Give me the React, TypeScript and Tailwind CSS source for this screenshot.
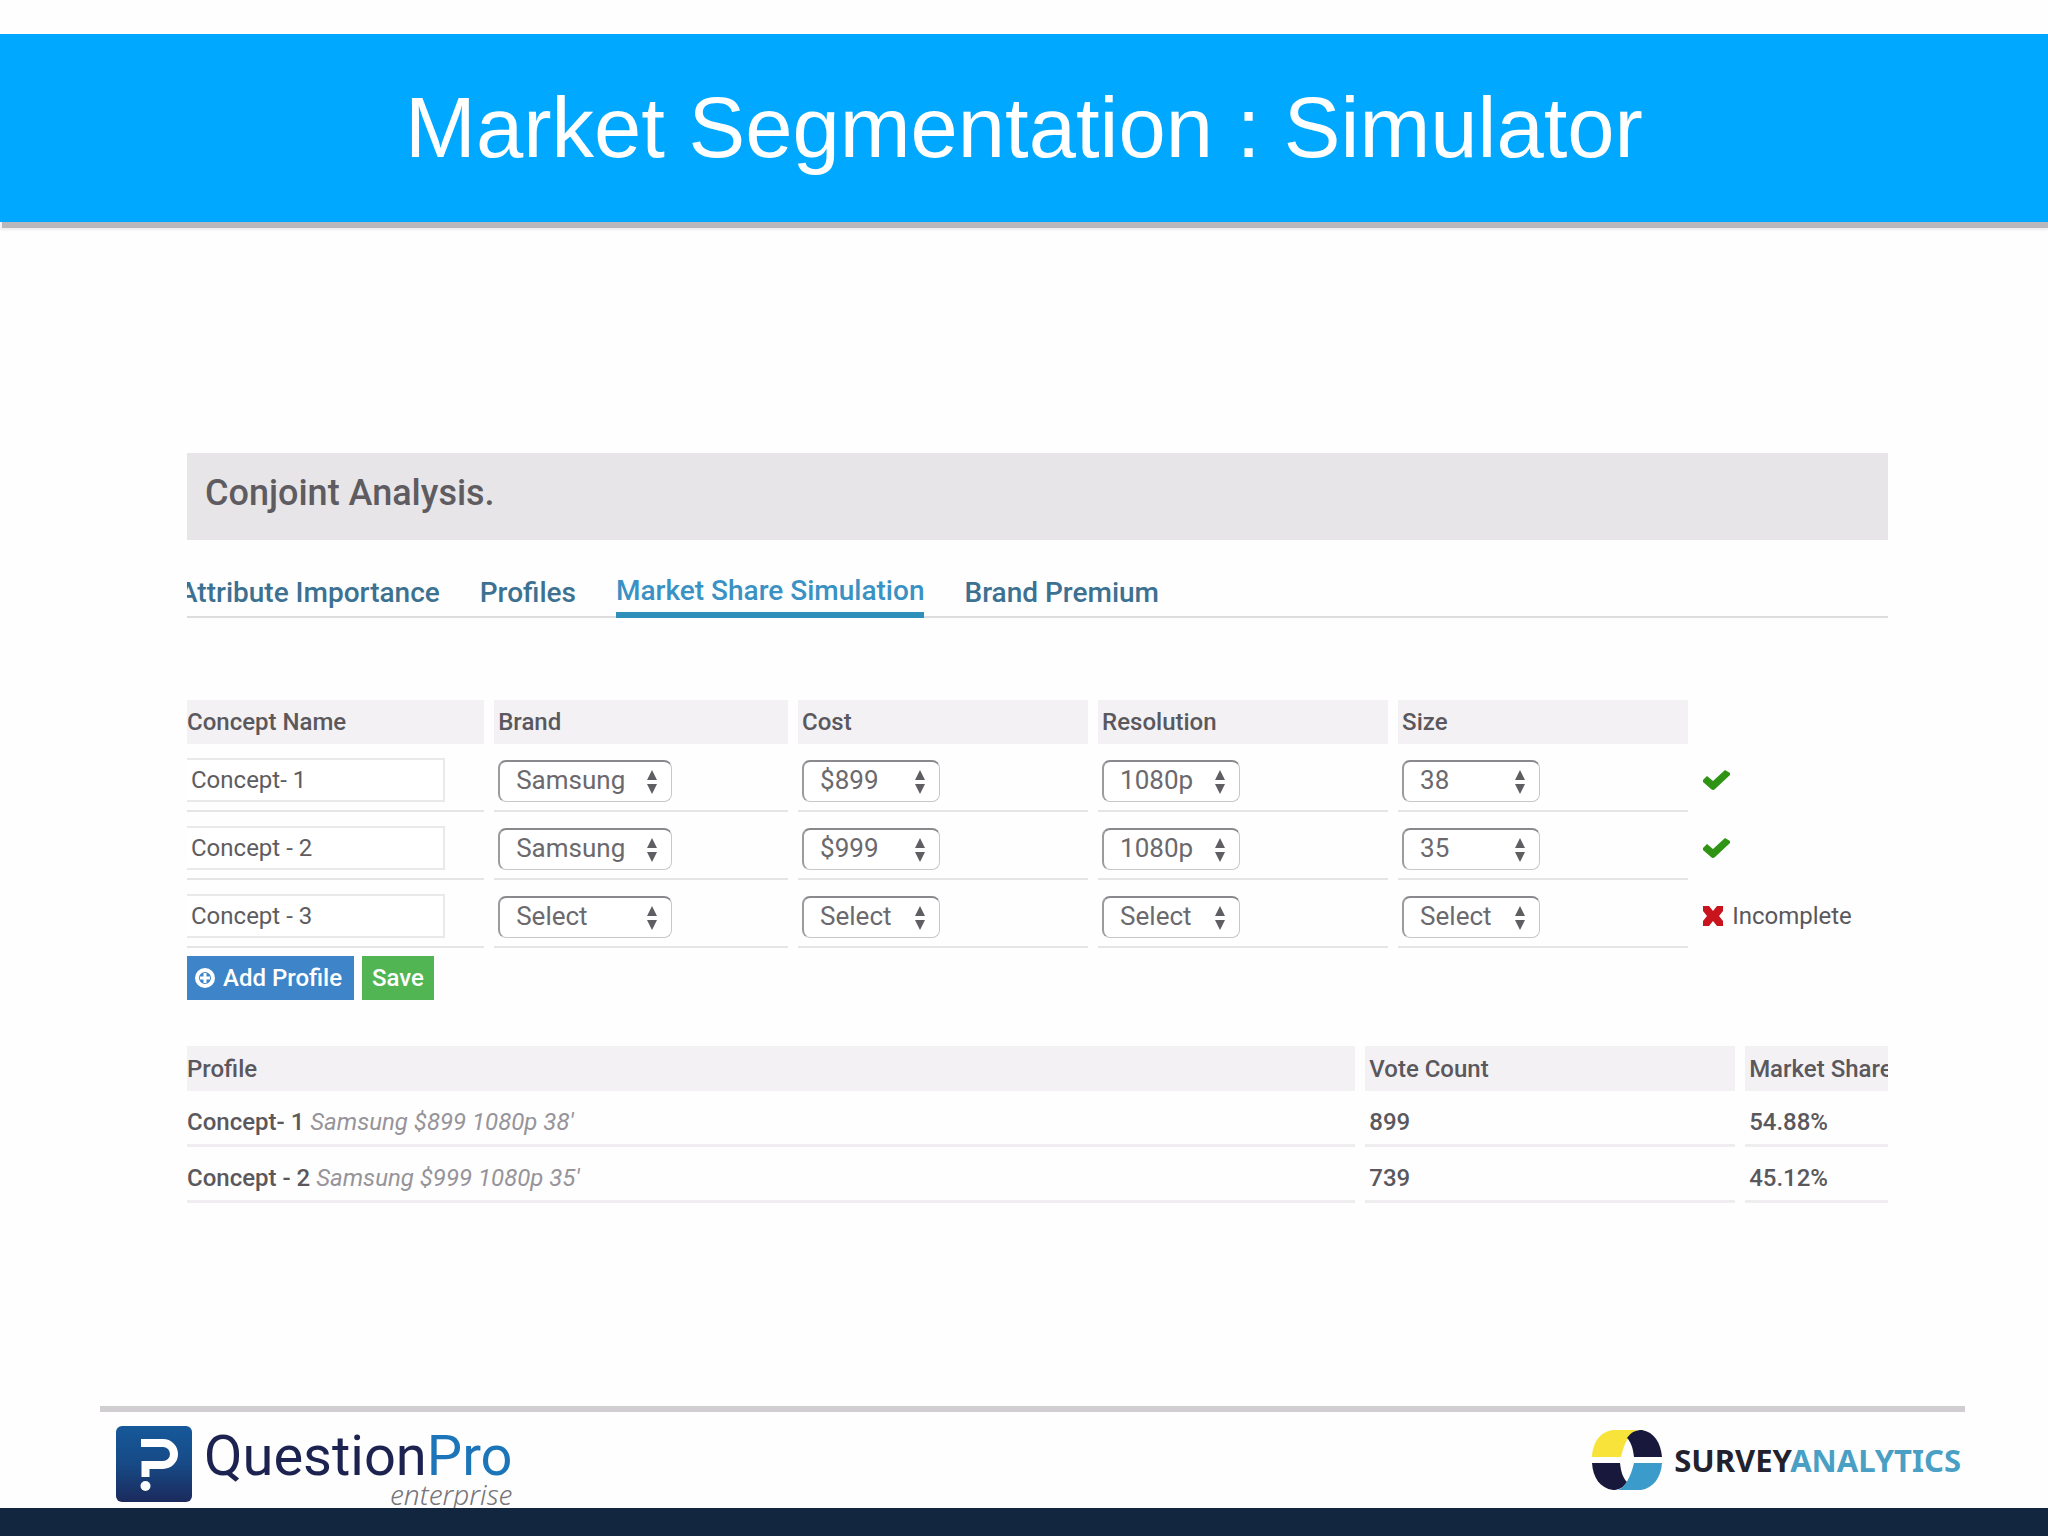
import React, { useState } from 'react';

type Concept = {
  name: string;
  values: string[];
  complete: boolean;
};

const TABS = ['Attribute Importance', 'Profiles', 'Market Share Simulation', 'Brand Premium'];

const ATTRIBUTES = [
  { label: 'Brand', options: ['Select', 'Samsung'], column: 'w-[17.8%]', width: 'w-[174px]' },
  { label: 'Cost', options: ['Select', '$899', '$999'], column: '', width: 'w-[138px]' },
  { label: 'Resolution', options: ['Select', '1080p'], column: '', width: 'w-[138px]' },
  { label: 'Size', options: ['Select', '35', '38'], column: '', width: 'w-[138px]' },
];

const CONCEPTS: Concept[] = [
  { name: 'Concept- 1', values: ['Samsung', '$899', '1080p', '38'], complete: true },
  { name: 'Concept - 2', values: ['Samsung', '$999', '1080p', '35'], complete: true },
  { name: 'Concept - 3', values: ['Select', 'Select', 'Select', 'Select'], complete: false },
];

const RESULTS = [
  { name: 'Concept- 1', details: "Samsung $899 1080p 38'", votes: '899', share: '54.88%' },
  { name: 'Concept - 2', details: "Samsung $999 1080p 35'", votes: '739', share: '45.12%' },
];

const CheckIcon = () => (
  <svg viewBox="0 0 28 22" className="h-[22px] w-7" aria-hidden="true">
    <path d="M1 11l4-4 6 5L23 1l5 3v2L13 20q-2 2-4 0L1 13z" fill="#2f9414" />
  </svg>
);

const CrossIcon = () => (
  <svg viewBox="0 0 22 22" className="h-[22px] w-[22px]" aria-hidden="true">
    <path d="M1 1h6l4 5 4-5h6v5l-4 5 4 5v5h-6l-4-5-4 5H1v-5l4-5-4-5z" fill="#c8141c" />
  </svg>
);

const PlusCircleIcon = () => (
  <svg viewBox="0 0 20 20" className="h-5 w-5" aria-hidden="true">
    <circle cx="10" cy="10" r="8" fill="none" stroke="white" strokeWidth="4" />
    <path d="M10 5v10M5 10h10" stroke="white" strokeWidth="3" />
  </svg>
);

const SelectBox: React.FC<{ label: string; options: string[]; value: string; width: string }> = ({
  label,
  options,
  value,
  width,
}) => (
  <div className={`relative ${width}`}>
    <select
      aria-label={label}
      defaultValue={value}
      className="block h-[42px] w-full appearance-none rounded-lg border border-t-2 border-l-2 border-[#c8c6ca] border-t-[#8a888c] border-l-[#9c9a9e] bg-white pb-1 pl-4 text-[26px] leading-8 text-[#6b696d]"
    >
      {options.map((option) => (
        <option key={option}>{option}</option>
      ))}
    </select>
    <svg
      viewBox="0 0 12 24"
      className="pointer-events-none absolute top-2.5 right-3.5 h-6 w-3"
      aria-hidden="true"
    >
      <path d="M6 0l5 10H1zM6 24l5-10H1z" fill="#605e62" />
    </svg>
  </div>
);

const QuestionProLogo = () => (
  <div className="flex items-start gap-3">
    <svg viewBox="0 0 76 76" className="h-[76px] w-[76px]" aria-hidden="true">
      <defs>
        <linearGradient id="qp" x1="0" y1="0" x2="0" y2="1">
          <stop offset="0" stopColor="#16589a" />
          <stop offset="0.5" stopColor="#174a86" />
          <stop offset="1" stopColor="#1b2a5c" />
        </linearGradient>
      </defs>
      <rect width="76" height="76" rx="6" fill="url(#qp)" />
      <path d="M25 17H47a11 11 0 0 1 0 22H29.5V51" fill="none" stroke="white" strokeWidth="8" />
      <circle cx="29.5" cy="60" r="5" fill="white" />
    </svg>
    <div className="flex flex-col items-end">
      <span className="text-[56px] leading-[60px] text-[#1c2350]">
        Question<span className="text-[#1b75b8]">Pro</span>
      </span>
      <span className="font-['Noto_Sans',sans-serif] text-[28px] leading-4 font-light text-[#77757a] italic">
        enterprise
      </span>
    </div>
  </div>
);

const SurveyAnalyticsLogo = () => (
  <div className="flex items-center gap-3">
    <svg viewBox="0 0 70 60" className="h-[60px] w-[70px]" aria-hidden="true">
      <path d="M0 27C1 11 9 1 22 0H46C38 2 32 13 29 27z" fill="#f7e33a" />
      <path d="M35 8C39 2 44 0 50 0 62 2 69 13 70 27H42C41 18 39 12 35 8z" fill="#17183c" />
      <path d="M0 33H28C29 42 31 48 35 52 31 58 27 60 21 60 8 58 1 48 0 33z" fill="#17183c" />
      <path d="M70 33H42C39 46 33 58 26 60H49C61 58 69 48 70 33z" fill="#3b9bcb" />
    </svg>
    <span className="font-['Noto_Sans',sans-serif] text-[31px] leading-10 font-bold text-[#22222e]">
      SURVEY<span className="text-[#4a9fc4]">ANALYTICS</span>
    </span>
  </div>
);

export default function App() {
  const [activeTab, setActiveTab] = useState('Market Share Simulation');

  return (
    <div className="flex min-h-screen flex-col bg-[#fefefe] font-['Roboto',sans-serif] text-[#5a585c]">
      <header className="mt-[34px] bg-[#00a9ff] py-11 text-center shadow-[2px_6px_0_#b8b8bc,0_8px_2px_#eeecee]">
        <h1 className="font-['Liberation_Sans',sans-serif] text-[85px] leading-[100px] text-white">
          Market Segmentation : Simulator
        </h1>
      </header>

      <main className="mt-[231px] mr-40 ml-[187px] overflow-hidden whitespace-nowrap">
        <h2 className="bg-[#e7e5e8] px-[18px] pt-5 pb-[27px] text-[36px] leading-10 font-medium text-[#5e5c60]">
          Conjoint Analysis.
        </h2>

        <nav className="mt-[33px] flex gap-10 border-b-2 border-[#dedcdf] text-[28px] leading-9 font-medium text-[#3d7191]">
          {TABS.map((tab) => (
            <a
              key={tab}
              href="#"
              onClick={() => setActiveTab(tab)}
              className={
                tab === activeTab
                  ? '-mb-0.5 border-b-[6px] border-[#2e8fbb] pb-[3px] text-[#3a92c4]'
                  : 'pt-0.5 pb-[3px] first:-ml-2'
              }
            >
              {tab}
            </a>
          ))}
        </nav>

        <div className="-mx-2.5 mt-[82px]">
          <table className="w-full table-fixed border-separate border-spacing-x-2.5 border-spacing-y-0 text-left">
            <thead>
              <tr className="h-11 text-2xl font-medium">
                <th className="w-[18%] bg-[#f3f1f4] font-medium">Concept Name</th>
                {ATTRIBUTES.map(({ label, column }) => (
                  <th key={label} className={`bg-[#f3f1f4] pl-1 font-medium ${column}`}>
                    {label}
                  </th>
                ))}
                <td className="w-[11.5%]"></td>
              </tr>
            </thead>
            <tbody>
              {CONCEPTS.map((concept) => (
                <tr key={concept.name} className="h-[68px]">
                  <td className="border-b-2 border-[#e6e4e7] pt-3.5 pb-2">
                    <input
                      aria-label="Concept Name"
                      defaultValue={concept.name}
                      className="block h-11 w-[258px] border-2 border-l-0 border-[#eae8eb] bg-white pl-1 text-2xl text-[#5e5c60]"
                    />
                  </td>
                  {ATTRIBUTES.map(({ label, options, width }, i) => (
                    <td key={label} className="border-b-2 border-[#e6e4e7] pt-4 pb-2 pl-1">
                      <SelectBox label={label} options={options} width={width} value={concept.values[i]} />
                    </td>
                  ))}
                  <td className="pt-1 pl-1">
                    {concept.complete ? (
                      <CheckIcon />
                    ) : (
                      <span className="flex items-center gap-2 text-2xl">
                        <CrossIcon /> Incomplete
                      </span>
                    )}
                  </td>
                </tr>
              ))}
            </tbody>
          </table>
        </div>

        <div className="mt-2 flex gap-2 text-2xl font-medium text-white">
          <button className="flex h-11 items-center gap-2 bg-[#3d85c8] pr-3 pl-2">
            <PlusCircleIcon /> Add Profile
          </button>
          <button className="h-11 bg-[#50b552] px-2.5">Save</button>
        </div>

        <div className="-mx-2.5 mt-[46px]">
          <table className="w-full table-fixed border-separate border-spacing-x-2.5 border-spacing-y-0 text-left text-2xl font-medium">
            <thead>
              <tr className="h-[45px]">
                <th className="bg-[#f3f1f4] font-medium">Profile</th>
                <th className="w-[22%] bg-[#f3f1f4] pl-1 font-medium">Vote Count</th>
                <th className="w-[8.5%] bg-[#f3f1f4] pl-1 font-medium">Market Share</th>
              </tr>
            </thead>
            <tbody>
              {RESULTS.map((result) => (
                <tr key={result.name} className="h-14">
                  <td className="border-b-[3px] border-[#efedf0] pt-2">
                    {result.name} <em className="font-normal text-[#96949a]">{result.details}</em>
                  </td>
                  <td className="border-b-[3px] border-[#efedf0] pt-2 pl-1">{result.votes}</td>
                  <td className="border-b-[3px] border-[#efedf0] pt-2 pl-1">{result.share}</td>
                </tr>
              ))}
            </tbody>
          </table>
        </div>
      </main>

      <footer className="mt-auto">
        <div className="mr-[83px] ml-[100px] flex h-[102px] items-start justify-between overflow-hidden border-t-[6px] border-[#d0ced1] pr-1 pl-4">
          <div className="pt-3.5">
            <QuestionProLogo />
          </div>
          <div className="pt-[18px]">
            <SurveyAnalyticsLogo />
          </div>
        </div>
        <div className="h-7 bg-[#12263f]"></div>
      </footer>
    </div>
  );
}
